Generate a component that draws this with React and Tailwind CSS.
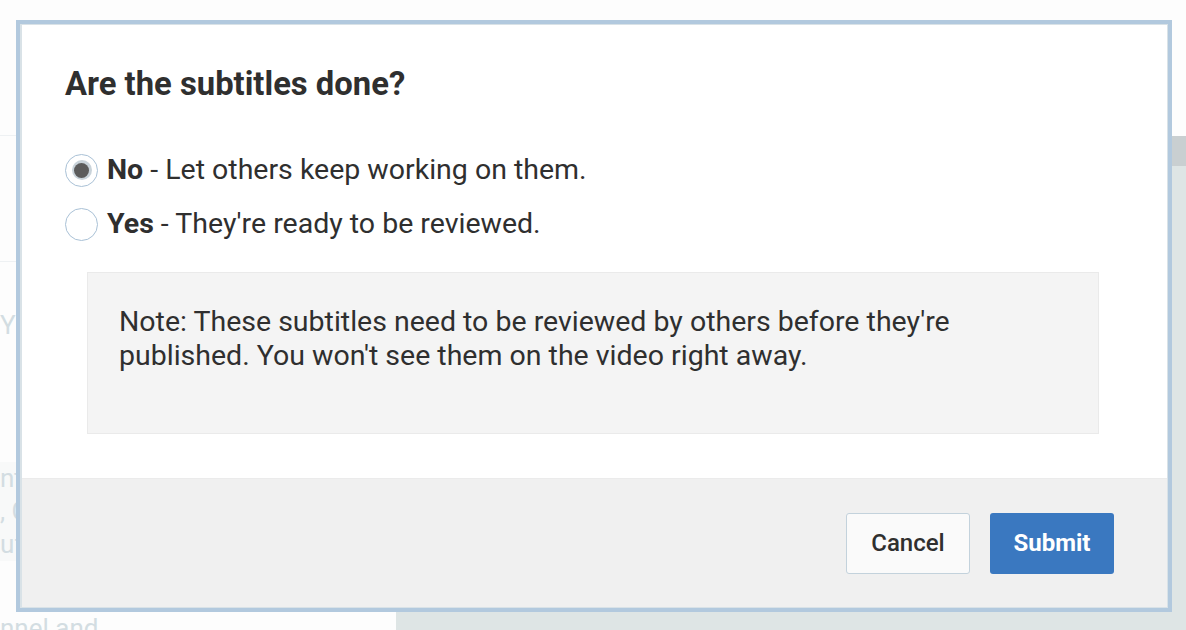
import React from 'react';

const font = { fontFamily: 'Roboto, "Noto Sans", Arial, sans-serif' };

const Radio = ({ checked }) => (
  <span className="flex h-[33px] w-[33px] shrink-0 items-center justify-center rounded-full border border-[#a9c1d6] bg-white">
    {checked && (
      <span className="flex h-[20px] w-[20px] items-center justify-center rounded-full bg-[#c9d3da]">
        <span className="h-[15px] w-[15px] rounded-full bg-[#5c5c5c]" />
      </span>
    )}
  </span>
);

const Option = ({ checked, label, desc }) => (
  <label className="flex items-center gap-[9px] text-[28.5px] leading-[34px] text-[#2f2f2f]">
    <Radio checked={checked} />
    <span>
      <span className="font-bold">{label}</span> - {desc}
    </span>
  </label>
);

export default function App() {
  return (
    <div className="relative h-[630px] w-[1186px] overflow-hidden bg-[#fdfdfd]" style={font}>
      {/* page behind the dialog */}
      <div className="flex h-full">
        <div className="flex w-[396px] flex-col text-[#d3dde2]">
          <div className="h-[136px] border-b border-[#eef1f3]" />
          <div className="h-[126px] border-b border-[#eef1f3]" />
          <div className="pt-[46px] text-[26px] leading-[34px]">Y</div>
          <div className="mt-[120px] bg-[#f8f9f9] text-[26px] leading-[33px]">
            <div>nt</div>
            <div>, C</div>
            <div>uff</div>
          </div>
          <div className="mt-auto h-[14px] text-[26px] leading-[24px]">nnel and</div>
        </div>
        <div className="flex flex-1 flex-col">
          <div className="h-[136px]" />
          <div className="h-[30px] bg-[#c9cfd1]" />
          <div className="flex-1 bg-[#dee5e5]" />
        </div>
      </div>

      {/* dialog */}
      <div className="absolute left-[16px] top-[20px] h-[592px] w-[1156px] border-4 border-[#b2c9de]">
        <div className="flex h-full flex-col border border-l-2 border-[#d9e2e7] bg-white">
          <div className="flex flex-1 flex-col pl-[43px] pr-[68px] pt-[39px]">
            <h2 className="text-[32.8px] font-bold leading-[40px] text-[#2f2f2f]">Are the subtitles done?</h2>
            <div className="mt-[49px] flex flex-col gap-[20px]">
              <Option checked label="No" desc="Let others keep working on them." />
              <Option label="Yes" desc="They're ready to be reviewed." />
            </div>
            <div className="ml-[22px] mt-[31px] h-[162px] border border-[#eaeaea] bg-[#f4f4f4] px-[31px] pt-[32px] text-[28.5px] leading-[34px] text-[#2f2f2f]">
              Note: These subtitles need to be reviewed by others before they're
              <br />
              published. You won't see them on the video right away.
            </div>
          </div>
          <div className="flex h-[129px] items-center justify-end gap-[20px] border-t border-[#ebebeb] bg-[#f0f0f0] pr-[53px]">
            <button className="h-[61px] w-[124px] rounded-[3px] border border-[#c3d2dc] bg-[#fafafa] text-[24px] font-medium text-[#2f2f2f]">
              Cancel
            </button>
            <button className="h-[61px] w-[124px] rounded-[3px] bg-[#3a78c0] text-[24px] font-bold text-white">
              Submit
            </button>
          </div>
        </div>
      </div>
    </div>
  );
}
